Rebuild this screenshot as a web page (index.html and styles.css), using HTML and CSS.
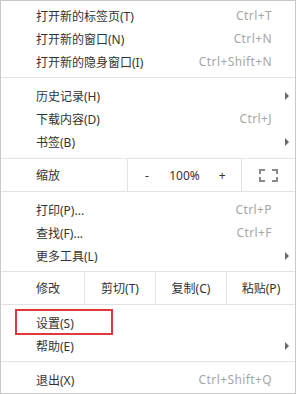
FILE: index.html
```html
<!DOCTYPE html>
<html lang="zh-CN">

<head>
    <meta charset="UTF-8">
    <meta name="viewport" content="width=device-width, initial-scale=1.0">
    <title>浏览器菜单</title>
    <link rel="stylesheet" href="styles.css">
</head>

<body>
    <div class="menu">
        <div class="item"><span class="label">打开新的标签页(T)</span><span class="key">Ctrl+T</span></div>
        <div class="item"><span class="label">打开新的窗口(N)</span><span class="key">Ctrl+N</span></div>
        <div class="item"><span class="label">打开新的隐身窗口(I)</span><span class="key">Ctrl+Shift+N</span></div>
        <div class="sep"></div>

        <div class="item"><span class="label">历史记录(H)</span><span class="arrow"></span></div>
        <div class="item"><span class="label">下载内容(D)</span><span class="key">Ctrl+J</span></div>
        <div class="item"><span class="label">书签(B)</span><span class="arrow"></span></div>

        <!-- 缩放 -->
        <div class="zoom-row">
            <div class="zoom-label">缩放</div>
            <div class="zoom-ctrl">
                <span>-</span>
                <span>100%</span>
                <span>+</span>
            </div>
            <div class="zoom-full">
                <svg width="19" height="13" viewBox="0 0 19 13">
                    <path d="M1 5V1h5M13 1h5v4M18 8v4h-5M6 12H1V8" fill="none" stroke="#8a8a8a" stroke-width="2" />
                </svg>
            </div>
        </div>

        <div class="item"><span class="label">打印(P)...</span><span class="key">Ctrl+P</span></div>
        <div class="item"><span class="label">查找(F)...</span><span class="key">Ctrl+F</span></div>
        <div class="item"><span class="label">更多工具(L)</span><span class="arrow"></span></div>

        <!-- 编辑 -->
        <div class="edit-row">
            <div class="edit-label">修改</div>
            <div class="edit-btn">剪切(T)</div>
            <div class="edit-btn">复制(C)</div>
            <div class="edit-btn last">粘贴(P)</div>
        </div>

        <div class="item marked"><span class="label">设置(S)</span></div>
        <div class="item"><span class="label">帮助(E)</span><span class="arrow"></span></div>
        <div class="sep"></div>

        <div class="item"><span class="label">退出(X)</span><span class="key">Ctrl+Shift+Q</span></div>
    </div>
</body>

</html>
```

FILE: styles.css
```css
/* 基础样式 */
body {
    margin: 0;
    background: #ffffff;
    font-family: 'Noto Sans', 'Noto Sans CJK SC', sans-serif;
    font-size: 12px;
    color: #333333;
}

/* 菜单容器 */
.menu {
    width: 296px;
    height: 394px;
    box-sizing: border-box;
    border: 1px solid #c8c8c8;
    padding-top: 3px;
    background: #ffffff;
}

/* 菜单项 */
.item {
    display: flex;
    align-items: center;
    height: 23px;
    padding: 0 23px 0 35px;
    position: relative;
}

.label {
    flex: 1;
    white-space: nowrap;
}

.key {
    color: #a6a6a6;
    white-space: nowrap;
    letter-spacing: 0.4px;
}

/* 子菜单箭头 */
.arrow {
    width: 0;
    height: 0;
    border-left: 4px solid #6a6a6a;
    border-top: 4px solid transparent;
    border-bottom: 4px solid transparent;
    margin-right: -17px;
}

/* 分隔线 */
.sep {
    height: 1px;
    background: #e3e3e3;
    margin: 4px 0 6px;
}

/* 缩放行 */
.zoom-row {
    display: flex;
    height: 32px;
    border-top: 1px solid #e3e3e3;
    border-bottom: 1px solid #e3e3e3;
    margin: 5px 0 6px;
    align-items: stretch;
}

.zoom-label {
    width: 91px;
    padding-left: 35px;
    display: flex;
    align-items: center;
    border-right: 1px solid #e3e3e3;
}

.zoom-ctrl {
    width: 113px;
    display: grid;
    grid-template-columns: repeat(3, 1fr);
    align-items: center;
    text-align: center;
    border-right: 1px solid #e3e3e3;
}

.zoom-full {
    flex: 1;
    display: flex;
    align-items: center;
    justify-content: center;
}

/* 编辑行 */
.edit-row {
    display: grid;
    grid-template-columns: 84px 71px 71px 1fr;
    height: 32px;
    border-top: 1px solid #e3e3e3;
    border-bottom: 1px solid #e3e3e3;
    margin: 4px 0 6px;
}

.edit-label,
.edit-btn {
    display: flex;
    align-items: center;
    border-right: 1px solid #e3e3e3;
}

.edit-label {
    padding-left: 35px;
}

.edit-btn {
    justify-content: center;
}

.edit-btn.last {
    border-right: none;
}

/* 红框标注 */
.marked::after {
    content: '';
    position: absolute;
    left: 14px;
    top: -2px;
    width: 94px;
    height: 22px;
    border: 2px solid #e0393c;
}
```
